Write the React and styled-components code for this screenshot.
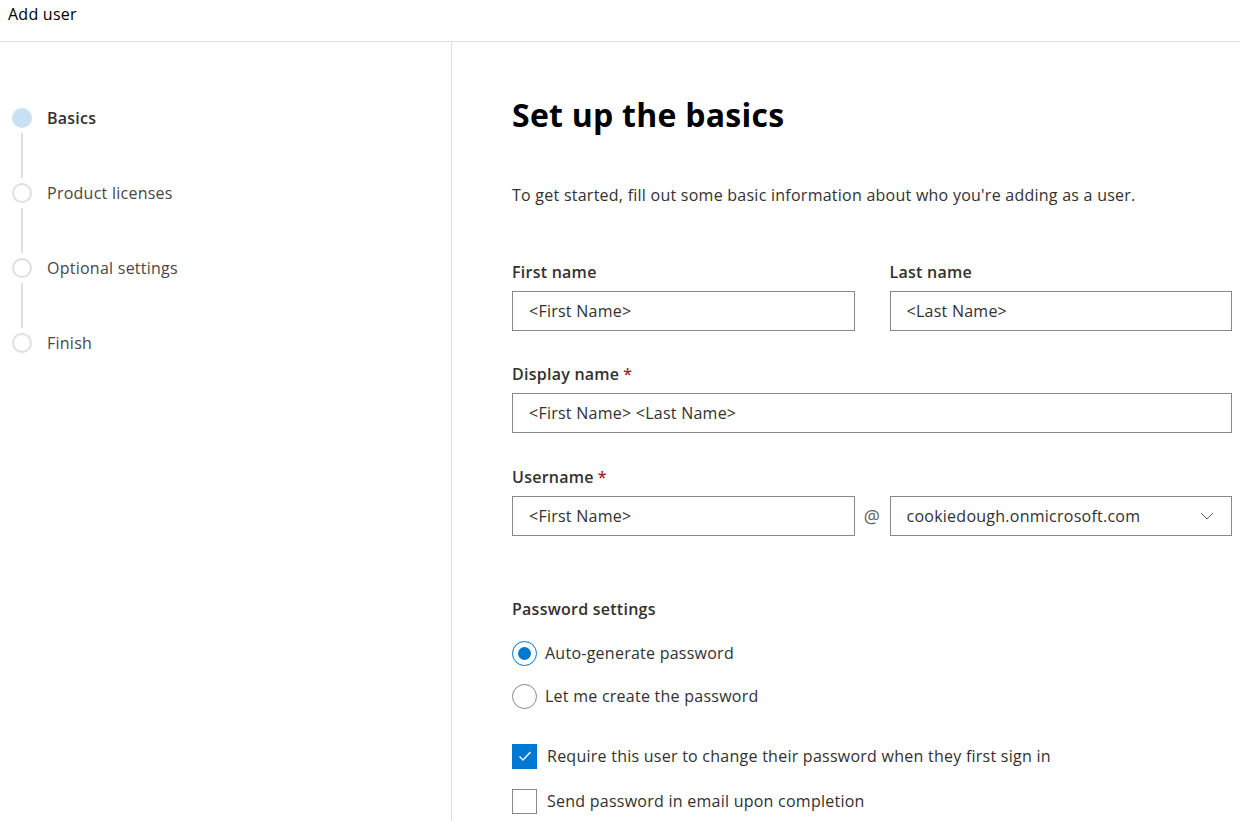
import styled, { createGlobalStyle } from "styled-components";

const GlobalStyle = createGlobalStyle`
  html, body {
    margin: 0;
    padding: 0;
    background: #ffffff;
    font-family: "Open Sans", "Noto Sans", sans-serif;
    letter-spacing: 0.25px;
    color: #323130;
  }
  * { box-sizing: border-box; }
`;

const Page = styled.div`
  width: 1240px;
  height: 821px;
  display: flex;
  flex-direction: column;
  overflow: hidden;
`;

const Header = styled.div`
  height: 42px;
  flex-shrink: 0;
  padding: 3px 0 0 8px;
  font-size: 16px;
  color: #000;
  border-bottom: 1px solid #e1dfdd;
`;

const Body = styled.div`
  flex: 1;
  display: flex;
`;

const Sidebar = styled.div`
  width: 452px;
  flex-shrink: 0;
  border-right: 1px solid #e1dfdd;
  padding: 65px 0 0 12px;
`;

const Step = styled.div`
  display: flex;
  flex-direction: column;
`;

const StepHead = styled.div`
  display: flex;
  align-items: center;
  gap: 15px;
  height: 22px;
`;

const Dot = styled.div`
  width: 20px;
  height: 20px;
  border-radius: 50%;
  flex-shrink: 0;
  background: ${(p) => (p.active ? "#c7e0f4" : "#fff")};
  border: ${(p) => (p.active ? "none" : "2px solid #e1dfdd")};
`;

const StepLabel = styled.span`
  font-size: 16px;
  color: ${(p) => (p.active ? "#323130" : "#484644")};
  font-weight: ${(p) => (p.active ? 600 : 400)};
`;

const Connector = styled.div`
  width: 2px;
  height: 45px;
  margin: 4px 0 4px 9px;
  background: #e1dfdd;
`;

const Main = styled.div`
  flex: 1;
  padding: 50px 8px 0 60px;
`;

const Title = styled.h1`
  margin: 0;
  font-size: 32px;
  font-weight: 700;
  color: #000;
  line-height: 46px;
`;

const Intro = styled.p`
  margin: 45px 0 0;
  font-size: 16px;
  line-height: 24px;
`;

const Row = styled.div`
  display: flex;
  gap: 35px;
  margin-top: ${(p) => p.top || 0}px;
`;

const Field = styled.div`
  flex: 1;
  min-width: 0;
  display: flex;
  flex-direction: column;
`;

const Label = styled.label`
  font-size: 16px;
  font-weight: 600;
  line-height: 24px;
  margin-bottom: 7px;
  color: #323130;
`;

const Required = styled.span`
  color: #a4262c;
  margin-left: 4px;
`;

const Input = styled.div`
  height: 40px;
  border: 1px solid #8a8886;
  display: flex;
  align-items: center;
  padding: 0 16px;
  font-size: 16px;
  color: #323130;
  white-space: nowrap;
`;

const InputRow = styled.div`
  display: flex;
  align-items: center;
  & > ${Input} {
    flex: 1 1 0;
    min-width: 0;
  }
`;

const At = styled.span`
  width: 35px;
  flex-shrink: 0;
  text-align: center;
  font-size: 18px;
  color: #605e5c;
`;

const Select = styled(Input)`
  justify-content: space-between;
`;

const Section = styled.div`
  margin-top: 61px;
`;

const SectionTitle = styled.div`
  font-size: 16px;
  font-weight: 600;
  color: #323130;
  line-height: 24px;
`;

const Options = styled.div`
  display: flex;
  flex-direction: column;
  gap: 19px;
  margin-top: 20px;
`;

const Option = styled.div`
  display: flex;
  align-items: center;
  gap: 8px;
  font-size: 16px;
  height: 24px;
`;

const Radio = styled.span`
  width: 25px;
  height: 25px;
  border-radius: 50%;
  border: 1px solid ${(p) => (p.checked ? "#0078d4" : "#8a8886")};
  display: flex;
  align-items: center;
  justify-content: center;
  &::after {
    content: "";
    width: 13px;
    height: 13px;
    border-radius: 50%;
    background: ${(p) => (p.checked ? "#0078d4" : "transparent")};
  }
`;

const Checks = styled.div`
  display: flex;
  flex-direction: column;
  gap: 21px;
  margin-top: 36px;
`;

const Check = styled.span`
  width: 25px;
  height: 25px;
  display: flex;
  align-items: center;
  justify-content: center;
  background: ${(p) => (p.checked ? "#0078d4" : "#fff")};
  border: 1px solid ${(p) => (p.checked ? "#0078d4" : "#8a8886")};
`;

const CheckOption = styled(Option)`
  gap: 10px;
`;

const steps = ["Basics", "Product licenses", "Optional settings", "Finish"];

export default function App() {
  return (
    <Page>
      <GlobalStyle />
      <Header>Add user</Header>
      <Body>
        <Sidebar>
          {steps.map((s, i) => (
            <Step key={s}>
              <StepHead>
                <Dot active={i === 0} />
                <StepLabel active={i === 0}>{s}</StepLabel>
              </StepHead>
              {i < steps.length - 1 && <Connector />}
            </Step>
          ))}
        </Sidebar>
        <Main>
          <Title>Set up the basics</Title>
          <Intro>
            To get started, fill out some basic information about who you're adding as a user.
          </Intro>
          <Row top={53}>
            <Field>
              <Label>First name</Label>
              <Input>&lt;First Name&gt;</Input>
            </Field>
            <Field>
              <Label>Last name</Label>
              <Input>&lt;Last Name&gt;</Input>
            </Field>
          </Row>
          <Row top={31}>
            <Field>
              <Label>
                Display name<Required>*</Required>
              </Label>
              <Input>&lt;First Name&gt; &lt;Last Name&gt;</Input>
            </Field>
          </Row>
          <Row top={32}>
            <Field>
              <Label>
                Username<Required>*</Required>
              </Label>
              <InputRow>
                <Input>&lt;First Name&gt;</Input>
                <At>@</At>
                <Select>
                  cookiedough.onmicrosoft.com
                  <svg width="16" height="16" viewBox="0 0 16 16" fill="none">
                    <path d="M2 5l6 6 6-6" stroke="#605e5c" strokeWidth="1" />
                  </svg>
                </Select>
              </InputRow>
            </Field>
          </Row>
          <Section>
            <SectionTitle>Password settings</SectionTitle>
            <Options>
              <Option>
                <Radio checked />
                Auto-generate password
              </Option>
              <Option>
                <Radio />
                Let me create the password
              </Option>
            </Options>
            <Checks>
              <CheckOption>
                <Check checked>
                  <svg width="16" height="16" viewBox="0 0 16 16" fill="none">
                    <path d="M2.5 8.5l3.5 3.5 7.5-8" stroke="#fff" strokeWidth="1.3" />
                  </svg>
                </Check>
                Require this user to change their password when they first sign in
              </CheckOption>
              <CheckOption>
                <Check />
                Send password in email upon completion
              </CheckOption>
            </Checks>
          </Section>
        </Main>
      </Body>
    </Page>
  );
}
